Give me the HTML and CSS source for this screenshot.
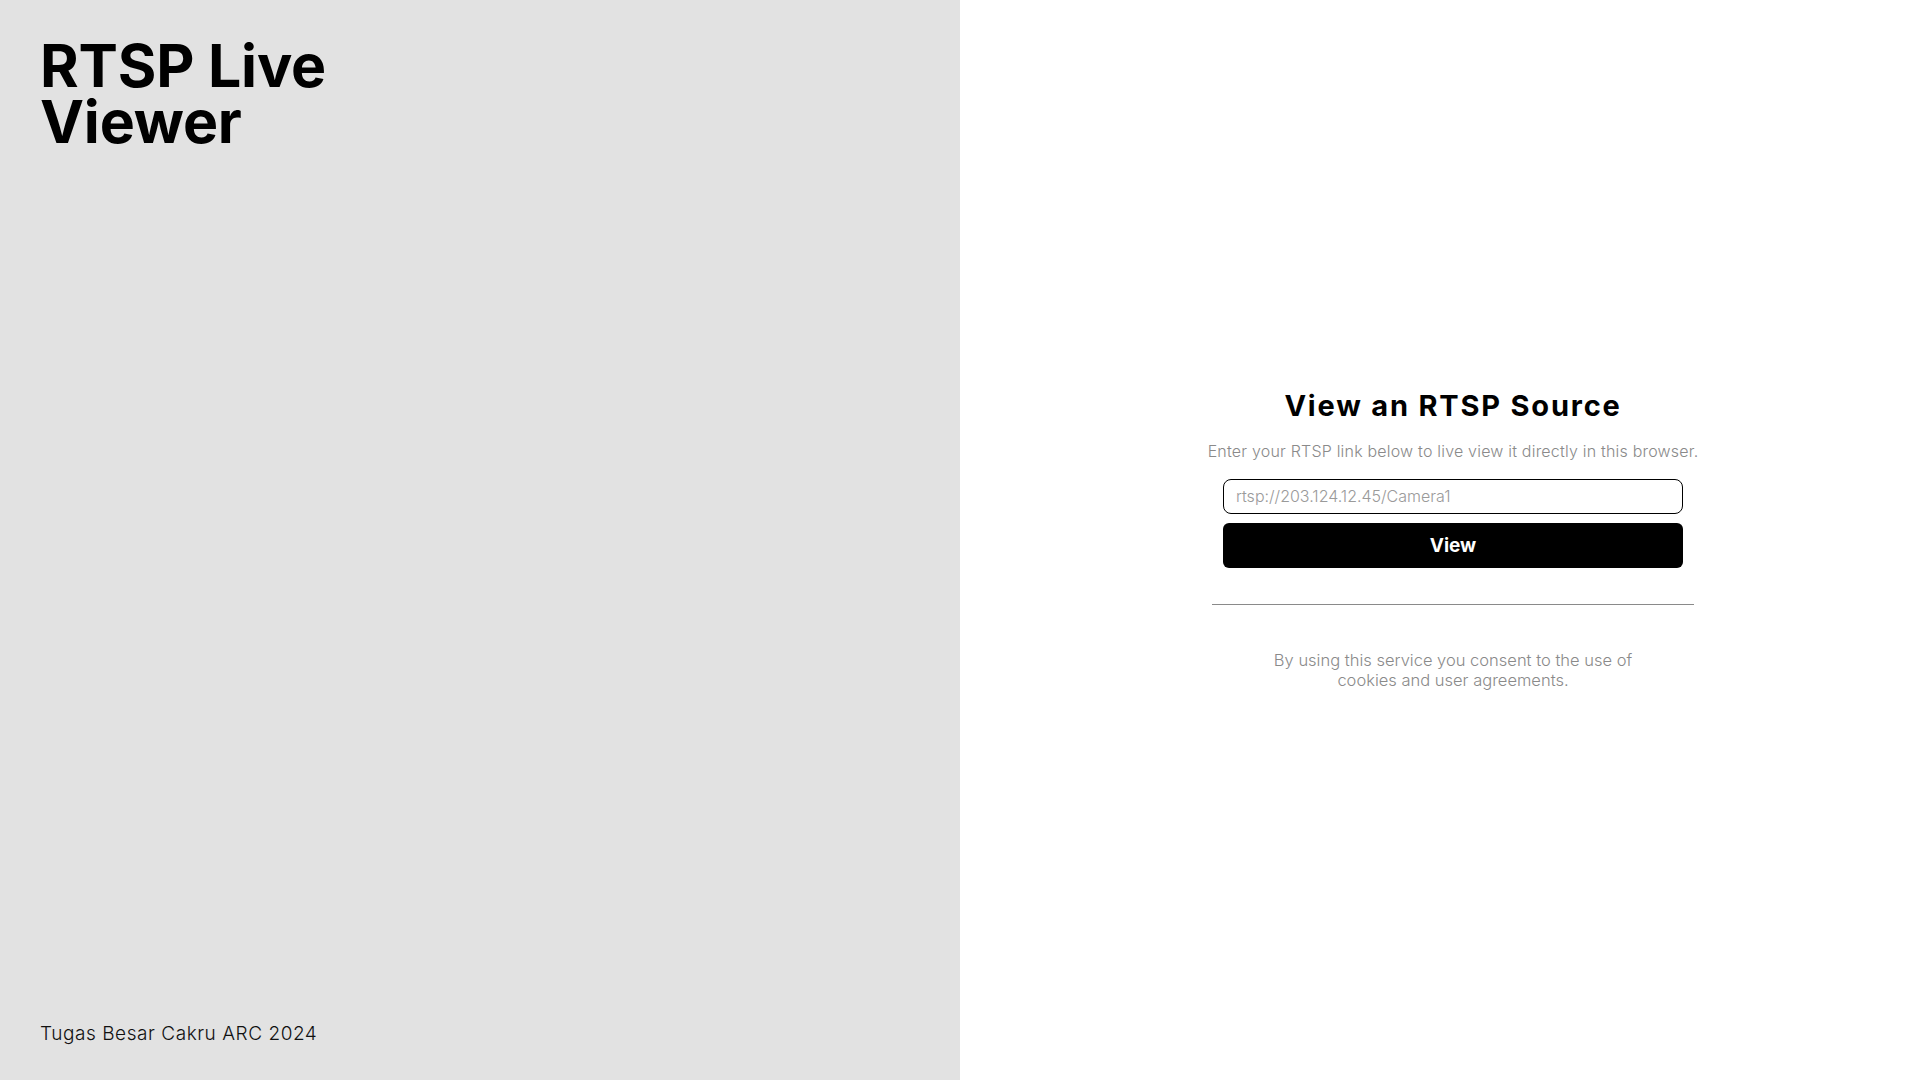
FILE: index.html
```html
<!DOCTYPE html>
<html lang="en">
<head>
<meta charset="utf-8">
<title>RTSP Live Viewer</title>
<link rel="stylesheet" href="styles.css">
</head>
<body>
<div class="page">
  <aside class="side">
    <h1 class="brand">RTSP Live<br>Viewer</h1>
    <p class="credit">Tugas Besar Cakru ARC 2024</p>
  </aside>
  <main class="main">
    <div class="card">
      <h2 class="title">View an RTSP Source</h2>
      <p class="lead">Enter your RTSP link below to live view it directly in this browser.</p>
      <form class="form">
        <input class="field" type="text" placeholder="rtsp://203.124.12.45/Camera1">
        <button class="btn" type="button">View</button>
      </form>
      <hr class="rule">
      <p class="note">By using this service you consent to the use of<br>cookies and user agreements.</p>
    </div>
  </main>
</div>
</body>
</html>
```

FILE: styles.css
```css
* { box-sizing: border-box; }
html, body { margin: 0; padding: 0; height: 100%; }
body { font-family: Inter, "Noto Sans", sans-serif; color: #000; background: #fff; }
.page { display: flex; height: 1080px; }
.side {
  width: 960px;
  background: #e2e2e2;
  display: flex;
  flex-direction: column;
  justify-content: space-between;
  padding: 38px 40px 35px 40px;
}
.brand {
  margin: 0;
  font-size: 59px;
  line-height: 56px;
  font-weight: 700;
  letter-spacing: -0.2px;
}
.credit {
  margin: 0;
  font-size: 19px;
  font-weight: 300;
  letter-spacing: 0.55px;
  color: #111;
}
.main {
  flex: 1;
  display: flex;
  align-items: center;
  justify-content: center;
  padding-left: 26px;
}
.card {
  width: 482px;
  display: flex;
  flex-direction: column;
  align-items: center;
  margin-top: -2px;
}
.title {
  margin: 0;
  font-size: 29px;
  line-height: 34px;
  font-weight: 700;
  letter-spacing: 1.8px;
  white-space: nowrap;
}
.lead {
  margin: 18px 0 0 0;
  font-size: 16px;
  font-weight: 300;
  letter-spacing: 0.2px;
  color: #8a8a8a;
  white-space: nowrap;
}
.form {
  width: 460px;
  display: flex;
  flex-direction: column;
  gap: 9px;
  margin-top: 18px;
}
.field {
  height: 35px;
  border: 1px solid #000;
  border-radius: 8px;
  padding: 0 12px;
  font-family: inherit;
  font-size: 16px;
  font-weight: 300;
  color: #000;
  background: #fff;
  outline: none;
}
.field::placeholder { color: #9a9a9a; }
.btn {
  height: 45px;
  border: 0;
  border-radius: 6px;
  background: #000;
  color: #fff;
  font-family: inherit;
  font-size: 19px;
  font-weight: 700;
  cursor: pointer;
}
.rule {
  width: 482px;
  margin: 36px 0 0 0;
  border: 0;
  border-top: 1px solid #8a8a8a;
}
.note {
  margin: 45px 0 0 0;
  text-align: center;
  font-size: 16.5px;
  line-height: 20px;
  font-weight: 300;
  color: #8a8a8a;
}
```
